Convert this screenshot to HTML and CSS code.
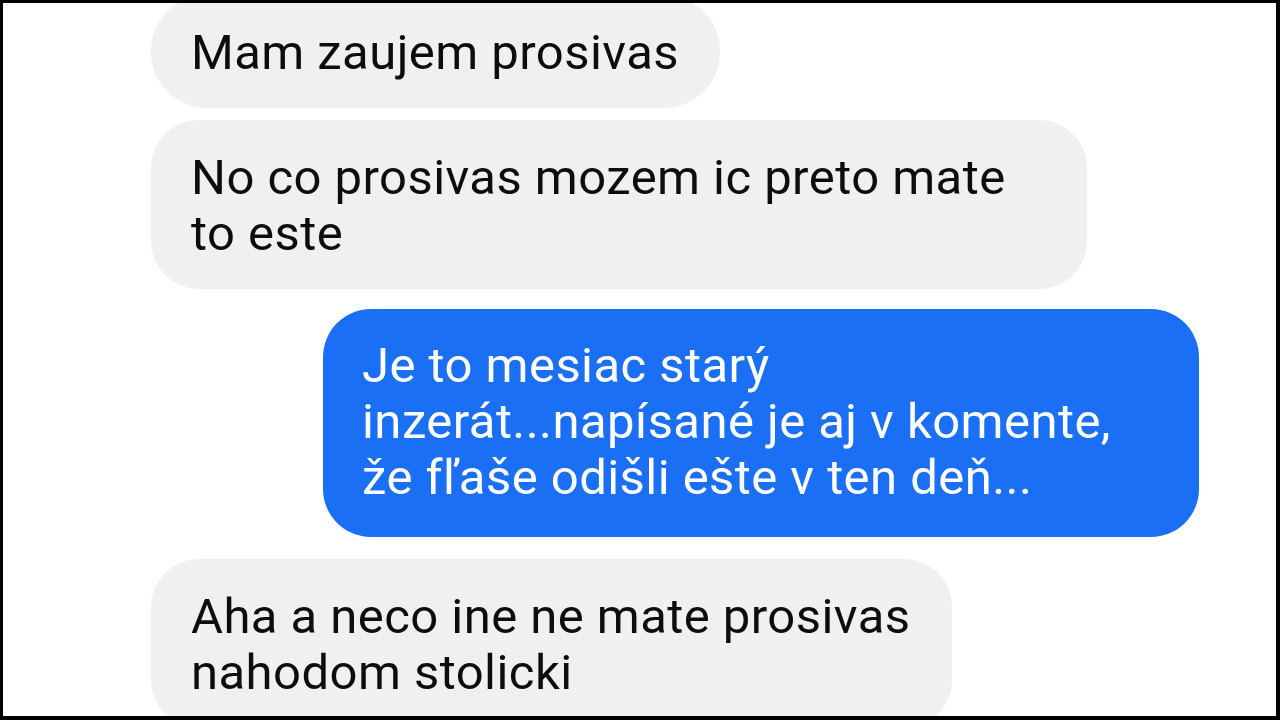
FILE: index.html
```html
<!DOCTYPE html>
<html lang="sk">
<head>
<meta charset="utf-8">
<title>Chat</title>
<link rel="stylesheet" href="styles.css">
</head>
<body>
<div class="frame">
  <div class="chat">
    <div class="msg msg-in msg-first">Mam zaujem prosivas</div>
    <div class="msg msg-in msg-wide">No co prosivas mozem ic preto mate<br>to este</div>
    <div class="msg msg-out">Je to mesiac starý<br>inzerát...napísané je aj v komente,<br>že fľaše odišli ešte v ten deň...</div>
    <div class="msg msg-in">Aha a neco ine ne mate prosivas<br>nahodom stolicki</div>
  </div>
</div>
</body>
</html>
```

FILE: styles.css
```css
* { box-sizing: border-box; }
html, body {
  margin: 0;
  padding: 0;
  width: 1280px;
  height: 720px;
  background: #000;
  overflow: hidden;
}
.frame {
  width: 1280px;
  height: 720px;
  padding: 3px 4px 4px 3px;
  background: #000;
}
.chat {
  width: 100%;
  height: 100%;
  background: #fff;
  overflow: hidden;
  display: flex;
  flex-direction: column;
  padding: 0 77px 0 148px;
  font-family: Roboto, "Noto Sans", sans-serif;
  font-size: 49px;
  line-height: 56px;
  letter-spacing: 0.45px;
  color: #0d0d0d;
}
.msg {
  border-radius: 48px;
  padding: 30px 41px 27px 40px;
  white-space: nowrap;
}
.msg-in {
  align-self: flex-start;
  background: #f0f0f0;
}
.msg-first {
  margin-top: -8px;
  border-radius: 56px;
}
.msg-in + .msg-in { margin-top: 12px; }
.msg-wide { width: 936px; }
.msg-out {
  align-self: flex-end;
  width: 876px;
  margin-top: 20px;
  margin-bottom: 22px;
  padding: 29px 40px 31px 39px;
  background: #1a6ff5;
  color: #fff;
}
```
